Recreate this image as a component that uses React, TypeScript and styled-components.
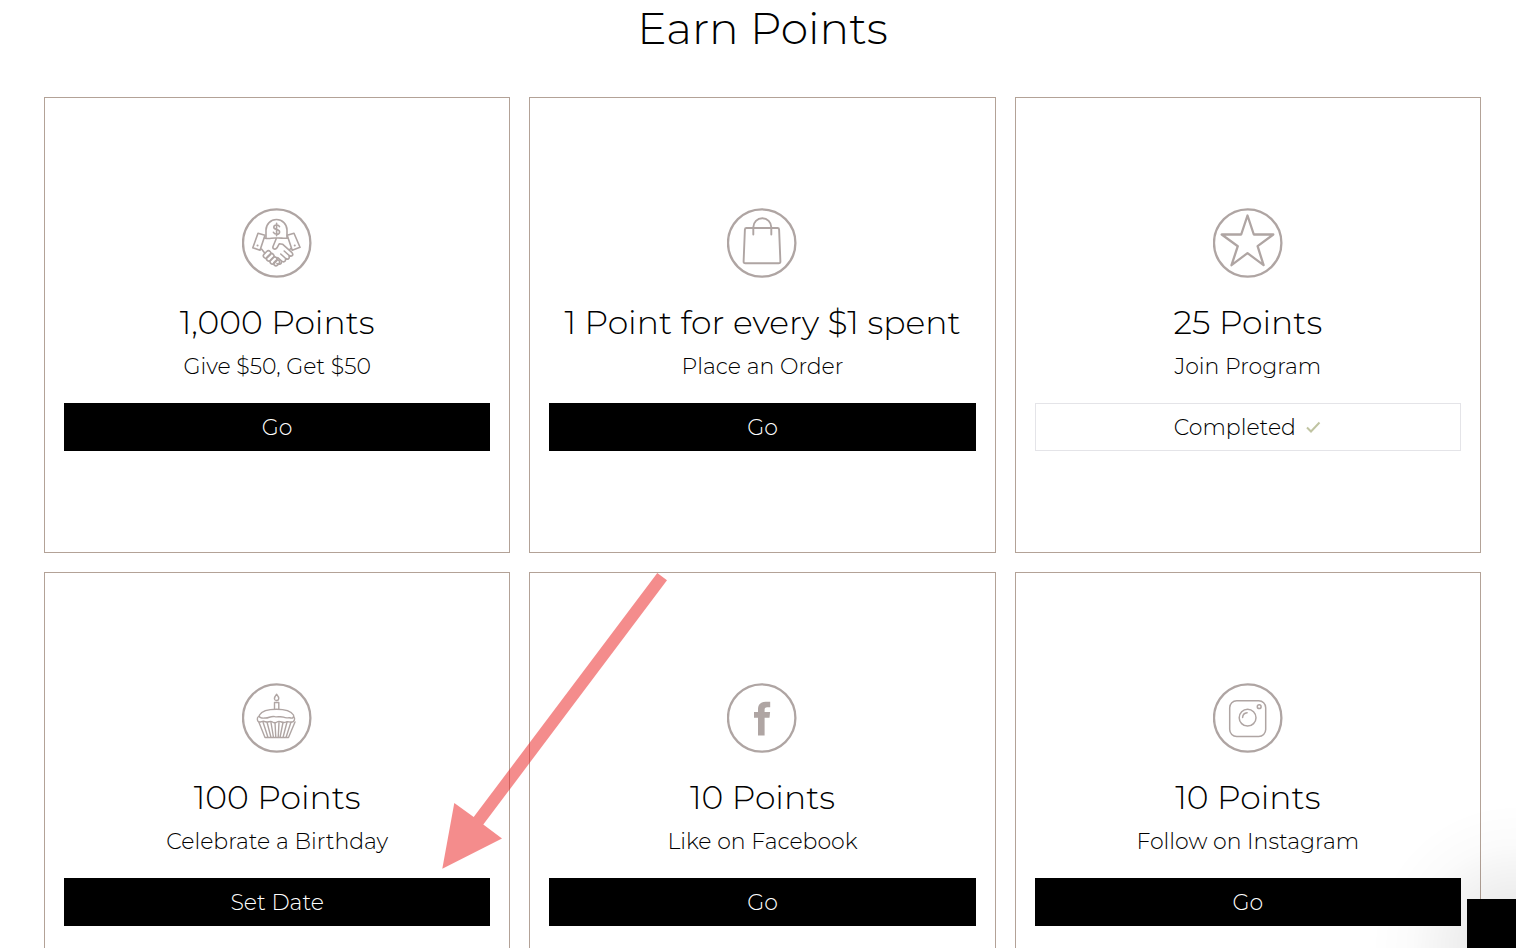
import React from 'react';
import styled, { createGlobalStyle, css } from 'styled-components';

const GlobalStyle = createGlobalStyle`
  *, *::before, *::after { box-sizing: border-box; }
  body {
    margin: 0;
    background: #fff;
    color: #000;
    font-family: Montserrat, Inter, "Open Sans", sans-serif;
    font-weight: 300;
  }
`;

const Page = styled.main`
  height: 100vh;
  overflow: hidden;
  padding: 0 35px 0 44px;
`;

const Title = styled.h1`
  margin: 0 0 41px;
  font-size: 44px;
  line-height: 56px;
  font-weight: 300;
  text-align: center;
`;

const Board = styled.div`
  position: relative;
`;

const Grid = styled.ul`
  display: grid;
  grid-template-columns: repeat(3, minmax(0, 1fr));
  gap: 19px;
  margin: 0;
  padding: 0;
  list-style: none;
`;

const Card = styled.li`
  display: flex;
  flex-direction: column;
  align-items: center;
  min-height: 456px;
  padding: 110px 19px 100px;
  border: 1px solid #b3a297;
  text-align: center;
`;

const Reward = styled.h2`
  margin: 25px 0 10px;
  font-size: 33px;
  line-height: 38px;
  font-weight: 300;
`;

const Action = styled.p`
  margin: 0 0 20px;
  font-size: 22px;
  line-height: 32px;
`;

const CardButton = styled.button<{ $done?: boolean }>`
  display: flex;
  align-items: center;
  justify-content: center;
  gap: 8px;
  width: 100%;
  height: 48px;
  padding: 0;
  border: 1px solid #000;
  border-radius: 0;
  background: #000;
  color: #fff;
  font: inherit;
  font-size: 22px;
  cursor: pointer;
  ${({ $done }) =>
    $done &&
    css`
      border-color: #e4e4e8;
      background: #fff;
      color: #000;
      cursor: default;
    `}
`;

const Badge = styled.svg`
  display: block;
  flex: none;
  width: 70px;
  height: 70px;
  fill: none;
  stroke: #afa5a3;
  stroke-linecap: round;
  stroke-linejoin: round;
`;

const Tick = styled.svg`
  width: 18px;
  height: 18px;
  fill: none;
  stroke: #c0c4a2;
  stroke-width: 2;
`;

const Arrow = styled.svg`
  position: absolute;
  top: 475px;
  left: 398px;
  width: 226px;
  height: 298px;
  fill: #eb1c1c;
  opacity: 0.5;
  pointer-events: none;
`;

const Glow = styled.div`
  position: fixed;
  right: 0;
  bottom: 0;
  width: 160px;
  height: 160px;
  background: radial-gradient(
    circle 145px at 100% 100%,
    rgba(0, 0, 0, 0.14),
    rgba(0, 0, 0, 0.065) 37%,
    rgba(0, 0, 0, 0.014) 72%,
    transparent
  );
  pointer-events: none;
`;

const Launcher = styled.button`
  position: fixed;
  right: 0;
  bottom: 0;
  width: 49px;
  height: 49px;
  padding: 0;
  border: 0;
  background: #000;
`;

const Handshake = () => (
  <g strokeWidth="1.600" transform="translate(-1 0)">
    <path d="M30 35.500V28a10.500 10.500 0 0 1 21 0v7.500" />
    <path d="M43.500 24.600c-.5-1.100-1.500-1.600-2.900-1.600-1.700 0-2.800.8-2.800 2.200 0 3.200 5.800 1.400 5.800 4.700 0 1.500-1.200 2.300-3 2.300-1.600 0-2.700-.6-3.200-1.900M40.600 21.300v12.500" />
    <path d="M22 31.300l7 2-5 15-7.200-2.500zM58 31.300l-6.800 2 5 15 7.800-3z" />
    <path d="M28.500 36c4.500 1.600 7.500-.5 12 0 4-.4 7 .8 11 .1M25.500 47l3.200 4M40.500 36l-3.500 8.500c-.8 2.800 2.500 3.600 4 1.300l2.200-4 3.300.4 9.500 8.500c2 2.300-.6 4.500-2.800 2.800l-5-4.500M54.800 46.500l-1.500 1.500M53 54c1 2.500-1.300 4-3.300 2.500l-5-4.500M49.500 57c.5 2.500-2 3.600-3.800 2.200l-4-3.500M45.500 60c0 2.300-2.800 3-4.500 1.500" />
    <rect x="26.500" y="50" width="8.500" height="4.800" rx="2.400" transform="rotate(-45 31 52)" />
    <rect x="29.700" y="53" width="8.500" height="4.800" rx="2.400" transform="rotate(-45 34 55)" />
    <rect x="33.200" y="56" width="8" height="4.800" rx="2.400" transform="rotate(-45 37.500 58)" />
    <rect x="37" y="59" width="6.500" height="4.400" rx="2.200" transform="rotate(-45 40 60.500)" />
    <path d="M21.500 43.600h.1M58.700 43.600h.1" strokeWidth="2" />
  </g>
);

const Bag = () => (
  <g strokeWidth="1.900">
    <path d="M24.500 26h31q1.500 0 1.600 1.500l1.300 32q0 1.800-1.800 1.800H23.400q-1.800 0-1.800-1.800l1.300-32q.1-1.500 1.600-1.500z" />
    <path d="M31.300 32.500v-7.300a9 9 0 0 1 18 0v7.300" />
  </g>
);

const Star = () => (
  <path strokeWidth="2.300" d="M39.500 13.500l6.300 19h19.500L49.600 44.200l6 19-16.100-12-16 12 6.300-19L13.700 32.500h19.500z" />
);

const Cupcake = () => (
  <g strokeWidth="1.400" transform="translate(-1 1)">
    <path d="M38.500 31v-6.500h4.300V31M40.600 16.300c-3.500 4.300-2.300 6.200 0 6.200s3.400-2.300 0-6.200z" />
    <path d="M23.500 37c2-3.500 7-5.800 17-5.800s14.800 2.300 17 5.800c.8 2-.8 3.500-2.500 3-3-.8-4 .8-7.500-.8-3-1.300-6 .2-8.500-.5-4-1.300-6.500 1.800-10 1.300-3.500.4-6.500-.4-5.500-3z" />
    <path d="M22.500 38.500c-2 1.500-1.300 5.500 1 5.500 1.800 0 2.500-1 4-.8 2 .3 2.500 1.300 4.500.8s3-1 4.500 0 3 1 4.500 0 3-.7 4.500 0 3 .8 4.500 0 3 .2 5 .2c3.800.2 4.500-4 2.500-5.700" />
    <path d="M22.800 44l6.200 15.500h23.500L59 44M27 44l5 15.500M31 44l4 15.500M35 44.500l2.500 15M39 44.500l.8 15M43 44.500l-.8 15M47 44.500l-3 15M51 44l-4 15.500M55 44l-5 15.500" />
  </g>
);

const Facebook = () => (
  <path
    fill="#afa5a3"
    stroke="none"
    d="M36 58.500V40.700h-4V35h4v-2.500c0-5.200 2.600-7.700 7.500-7.700h4.700v5.400h-3c-2 0-2.600.8-2.600 2.600V35h5.500l-.6 5.700h-4.900v17.800z"
  />
);

const Instagram = () => (
  <g strokeWidth="1.500" transform="translate(0 1)">
    <rect x="21.700" y="22.700" width="36" height="35.800" rx="7" />
    <circle cx="39.600" cy="39.700" r="8.400" />
    <path d="M34.600 39.500a5 5 0 0 1 4.500-4.700" />
    <circle cx="51.200" cy="28.700" r="1.900" />
  </g>
);

interface Offer {
  art: React.ReactNode;
  reward: string;
  action: string;
  label: string;
  done?: boolean;
}

const offers: Offer[] = [
  { art: <Handshake />, reward: '1,000 Points', action: 'Give $50, Get $50', label: 'Go' },
  { art: <Bag />, reward: '1 Point for every $1 spent', action: 'Place an Order', label: 'Go' },
  { art: <Star />, reward: '25 Points', action: 'Join Program', label: 'Completed', done: true },
  { art: <Cupcake />, reward: '100 Points', action: 'Celebrate a Birthday', label: 'Set Date' },
  { art: <Facebook />, reward: '10 Points', action: 'Like on Facebook', label: 'Go' },
  { art: <Instagram />, reward: '10 Points', action: 'Follow on Instagram', label: 'Go' },
];

export default function App() {
  return (
    <>
      <GlobalStyle />
      <Page>
        <Title>Earn Points</Title>
        <Board>
          <Grid>
            {offers.map((offer) => (
              <Card key={offer.action}>
                <Badge viewBox="5 6 70 70" aria-hidden="true">
                  <circle cx="39.700" cy="41" r="33.700" strokeWidth="2.300" />
                  {offer.art}
                </Badge>
                <Reward>{offer.reward}</Reward>
                <Action>{offer.action}</Action>
                <CardButton type="button" $done={offer.done}>
                  {offer.label}
                  {offer.done && (
                    <Tick viewBox="0 0 18 18" aria-hidden="true">
                      <path d="M3 9.500l4 4 8.500-9" />
                    </Tick>
                  )}
                </CardButton>
              </Card>
            ))}
          </Grid>
          <Arrow viewBox="442 572 226 298" aria-hidden="true">
            <path d="M657.300 573L667 580.300 483.300 824.500 502 838.400 442.300 868.700 454.300 803 473.700 817z" />
          </Arrow>
        </Board>
      </Page>
      <Glow />
      <Launcher type="button" aria-label="Open rewards" />
    </>
  );
}
